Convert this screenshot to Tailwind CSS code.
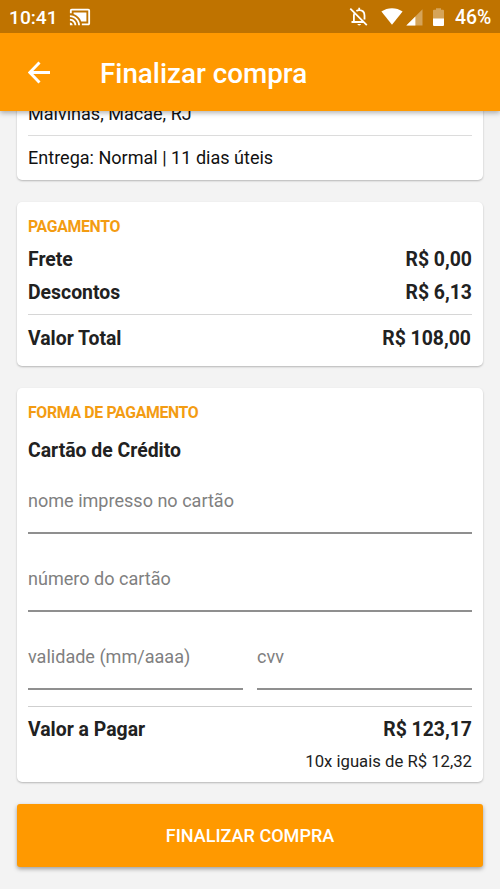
<!DOCTYPE html>
<html lang="pt-BR">
<head>
<meta charset="utf-8">
<meta name="viewport" content="width=device-width, initial-scale=1">
<title>Finalizar compra</title>
<script src="https://cdn.jsdelivr.net/npm/@tailwindcss/browser@4"></script>
</head>
<body class="bg-[#f3f3f3]">
<div class="flex h-[889px] w-[500px] flex-col overflow-hidden bg-[#f3f3f3] font-['Roboto',sans-serif] text-[#212121]">
  <div class="relative z-10 shrink-0 bg-[#ff9900] shadow-[0_2px_5px_rgba(0,0,0,0.3)]">
    <div class="flex h-[33px] items-center bg-[#bf7300] pt-[2px] text-white">
      <span class="ml-[9px] w-[60px] pt-[1px] text-[19.2px] font-medium leading-none">10:41</span>
      <svg class="mb-[1px] h-[22px] w-[22px]" viewBox="0 0 24 24" fill="currentColor"><path d="M21 3H3c-1.100 0-2 .9-2 2v3h2V5h18v14h-7v2h7c1.100 0 2-.9 2-2V5c0-1.100-.9-2-2-2zM1 18v3h3c0-1.660-1.340-3-3-3zm0-4v2c2.760 0 5 2.240 5 5h2c0-3.870-3.130-7-7-7zm18-7H5v1.630c3.960 1.280 7.090 4.410 8.370 8.370H19V7zM1 10v2c4.970 0 9 4.030 9 9h2c0-6.080-4.930-11-11-11z"/></svg>
      <svg class="ml-[258px] mb-[1px] h-[20px] w-[21px]" viewBox="0 0 21 20" fill="none" stroke="currentColor" stroke-width="1.800"><path d="M2.500 15H14.500M4.900 15V8.500Q4.900 7.400 5.300 6.500M7.400 3.900Q8.600 3.100 10.200 3.100C13.500 3.100 15.500 5.300 15.500 8.500V12.500M10.200 .8V3M1.300 1.700L17.800 18.200"/><path d="M8.300 17a2 2 0 0 0 3.800 0z" fill="currentColor" stroke="none"/></svg>
      <svg class="ml-[11px] mb-[2px] h-[17px] w-[22px]" viewBox="0 0 22 17" fill="currentColor"><path d="M.4 3.600C6.500-.9 15.500-.9 21.600 3.600L11 16.800z"/></svg>
      <svg class="ml-[3px] mb-[1px] h-[17px] w-[17px]" viewBox="0 0 17 17" fill="currentColor"><path d="M16.500 .3V16.500H.3z" opacity=".35"/><path d="M9.400 7.400V16.500H.3z"/></svg>
      <svg class="ml-[10px] mb-[2px] h-[18px] w-[11px]" viewBox="0 0 11 18" fill="currentColor"><path d="M1 1.800H3V.3H8V1.800H10Q11 1.800 11 2.800V11H0V2.800Q0 1.800 1 1.800z" opacity=".35"/><path d="M0 10.500H11V17Q11 18 10 18H1Q0 18 0 17z"/></svg>
      <span class="ml-[11px] pt-[1px] text-[19.4px] font-medium leading-none">46%</span>
    </div>
    <div class="flex h-[78px] items-center text-white">
      <svg class="ml-[28px] h-[23px] w-[23px]" viewBox="0 0 23 23" fill="none" stroke="currentColor" stroke-width="2.900"><path d="M22 11.500H2.200M11.500 1.400L1.800 11.500L11.500 21.600"/></svg>
      <h1 class="ml-[49px] pt-[4px] text-[27.8px] font-medium leading-none">Finalizar compra</h1>
    </div>
  </div>

  <main class="-mt-[11px] flex flex-col gap-[22px] px-[17px]">
    <section class="flex h-[80px] flex-col rounded-[5px] bg-white px-[11px] text-[18.06px] text-[#111] shadow-[0_1px_2px_rgba(0,0,0,0.25)]">
      <p class="flex h-[36px] items-center border-b border-[#dcdcdc] pb-[8px]">Malvinas, Macaé, RJ</p>
      <p class="flex h-[44px] items-center">Entrega: Normal | 11 dias úteis</p>
    </section>

    <section class="flex h-[164px] flex-col rounded-[5px] bg-white px-[11px] pt-[9px] text-[19.4px] font-bold shadow-[0_1px_2px_rgba(0,0,0,0.25)]">
      <h2 class="flex h-[32px] items-center text-[15.8px] tracking-[-0.02em] text-[#f39c12]">PAGAMENTO</h2>
      <div class="flex h-[33px] items-center justify-between"><span>Frete</span><span>R$ 0,00</span></div>
      <div class="flex h-[33px] items-center justify-between"><span>Descontos</span><span>R$ 6,13</span></div>
      <div class="mt-[5px] flex h-[48px] items-center justify-between border-t border-[#d6d6d6]"><span>Valor Total</span><span class="pr-[1px]">R$ 108,00</span></div>
    </section>

    <section class="flex h-[394px] flex-col rounded-[5px] bg-white px-[11px] pt-[9px] text-[19.4px] font-bold shadow-[0_1px_2px_rgba(0,0,0,0.25)]">
      <h2 class="flex h-[32px] items-center text-[15.8px] tracking-[-0.02em] text-[#f39c12]">FORMA DE PAGAMENTO</h2>
      <h3 class="flex h-[44px] items-center">Cartão de Crédito</h3>
      <div class="flex h-[61px] items-center border-b-2 border-[#8f8f8f] pb-[4px] text-[18.06px] font-normal text-[#808080]">nome impresso no cartão</div>
      <div class="flex h-[78px] items-center border-b-2 border-[#8f8f8f] pt-[13px] text-[18.06px] font-normal text-[#808080]">número do cartão</div>
      <div class="grid grid-cols-2 gap-[14px] text-[18.06px] font-normal text-[#808080]">
        <div class="flex h-[78px] items-center border-b-2 border-[#8f8f8f] pt-[13px]">validade (mm/aaaa)</div>
        <div class="flex h-[78px] items-center border-b-2 border-[#8f8f8f] pt-[13px]">cvv</div>
      </div>
      <div class="mt-[16px] flex h-[47px] items-center justify-between border-t border-[#cfcfcf]"><span>Valor a Pagar</span><span>R$ 123,17</span></div>
      <p class="flex h-[17px] items-center justify-end text-[16.7px] font-normal">10x iguais de R$ 12,32</p>
    </section>

    <button class="h-[63px] rounded-[3px] bg-[#ff9900] text-[18.06px] font-medium text-white shadow-[0_2px_4px_rgba(0,0,0,0.35)]">FINALIZAR COMPRA</button>
  </main>
</div>
</body>
</html>
